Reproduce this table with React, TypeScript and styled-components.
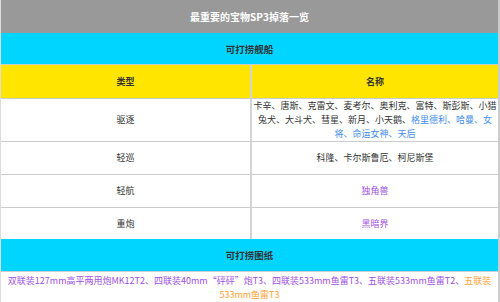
import React from 'react';
import styled, { createGlobalStyle } from 'styled-components';

const GlobalStyle = createGlobalStyle`
  html, body {
    margin: 0;
    padding: 0;
    background: #ffffff;
  }
  body {
    font-family: "Noto Sans CJK SC", "Noto Sans", sans-serif;
    color: #333333;
  }
`;

const StyledTable = styled.div`
  width: 500px;
  box-sizing: border-box;
  border-left: 1px solid #dddddd;
  border-right: 2px solid #cccccc;
  border-bottom: 2px solid #cccccc;
  font-size: 9px;
`;

const TitleRow = styled.div<{ $bg: string; $color: string; $height: number }>`
  display: flex;
  align-items: center;
  justify-content: center;
  height: ${(p) => p.$height}px;
  background-color: ${(p) => p.$bg};
  color: ${(p) => p.$color};
  font-weight: bold;
  font-size: ${(p) => (p.$color === '#ffffff' ? 10 : 9.5)}px;
`;

const Row = styled.div<{ $height: number; $bg?: string }>`
  display: grid;
  grid-template-columns: 249px 1fr;
  min-height: ${(p) => p.$height}px;
  background-color: ${(p) => p.$bg || '#ffffff'};
  border-top: 1px solid #cccccc;
`;

const Cell = styled.div<{ $bold?: boolean }>`
  display: flex;
  align-items: center;
  justify-content: center;
  text-align: center;
  font-size: 9px;
  line-height: 14px;
  padding: 0;
  font-weight: ${(p) => (p.$bold ? 'bold' : 'normal')};

  & + & {
    border-left: 2px solid #d4d4d4;
  }
`;

const FullCell = styled.div`
  border-top: 1px solid #cccccc;
  text-align: center;
  line-height: 14px;
  padding: 2px 4px 2px;
`;

const Name = styled.span<{ $tone?: 'blue' | 'purple' | 'orange' }>`
  color: ${(p) =>
    p.$tone === 'blue'
      ? '#3f8ee6'
      : p.$tone === 'purple'
        ? '#a04fe0'
        : p.$tone === 'orange'
          ? '#ffa231'
          : '#333333'};
`;

type Ship = { name: string; tone?: 'blue' | 'purple' | 'orange' };

const destroyers: Ship[] = [
  { name: '卡辛' },
  { name: '唐斯' },
  { name: '克雷文' },
  { name: '麦考尔' },
  { name: '奥利克' },
  { name: '富特' },
  { name: '斯彭斯' },
  { name: '小猎兔犬' },
  { name: '大斗犬' },
  { name: '彗星' },
  { name: '新月' },
  { name: '小天鹅' },
  { name: '格里德利', tone: 'blue' },
  { name: '哈曼', tone: 'blue' },
  { name: '女将', tone: 'blue' },
  { name: '命运女神', tone: 'blue' },
  { name: '天后', tone: 'blue' },
];

const blueprints: Ship[] = [
  { name: '双联装127mm高平两用炮MK12T2', tone: 'purple' },
  { name: '四联装40mm“砰砰”炮T3', tone: 'purple' },
  { name: '四联装533mm鱼雷T3', tone: 'purple' },
  { name: '五联装533mm鱼雷T2', tone: 'purple' },
  { name: '五联装533mm鱼雷T3', tone: 'orange' },
];

const NameList = ({ items }: { items: Ship[] }) => (
  <>
    {items.map((s, i) => (
      <React.Fragment key={s.name}>
        <Name $tone={s.tone}>{s.name}</Name>
        {i < items.length - 1 && <Name $tone={items[i + 1].tone && s.tone ? s.tone : undefined}>、</Name>}
      </React.Fragment>
    ))}
  </>
);

const App = () => {
  return (
    <>
      <GlobalStyle />
      <StyledTable>
        <TitleRow $bg="#999999" $color="#ffffff" $height={33}>
          最重要的宝物SP3掉落一览
        </TitleRow>
        <TitleRow $bg="#00d5ff" $color="#333333" $height={31}>
          可打捞舰船
        </TitleRow>
        <Row $height={33} $bg="#ffe500">
          <Cell $bold>类型</Cell>
          <Cell $bold>名称</Cell>
        </Row>
        <Row $height={42}>
          <Cell>驱逐</Cell>
          <Cell>
            <span>
              <NameList items={destroyers} />
            </span>
          </Cell>
        </Row>
        <Row $height={32}>
          <Cell>轻巡</Cell>
          <Cell>科隆、卡尔斯鲁厄、柯尼斯堡</Cell>
        </Row>
        <Row $height={32}>
          <Cell>轻航</Cell>
          <Cell>
            <Name $tone="purple">独角兽</Name>
          </Cell>
        </Row>
        <Row $height={31}>
          <Cell>重炮</Cell>
          <Cell>
            <Name $tone="purple">黑暗界</Name>
          </Cell>
        </Row>
        <TitleRow $bg="#00d5ff" $color="#333333" $height={32}>
          可打捞图纸
        </TitleRow>
        <FullCell>
          <NameList items={blueprints} />
        </FullCell>
      </StyledTable>
    </>
  );
};

export default App;
